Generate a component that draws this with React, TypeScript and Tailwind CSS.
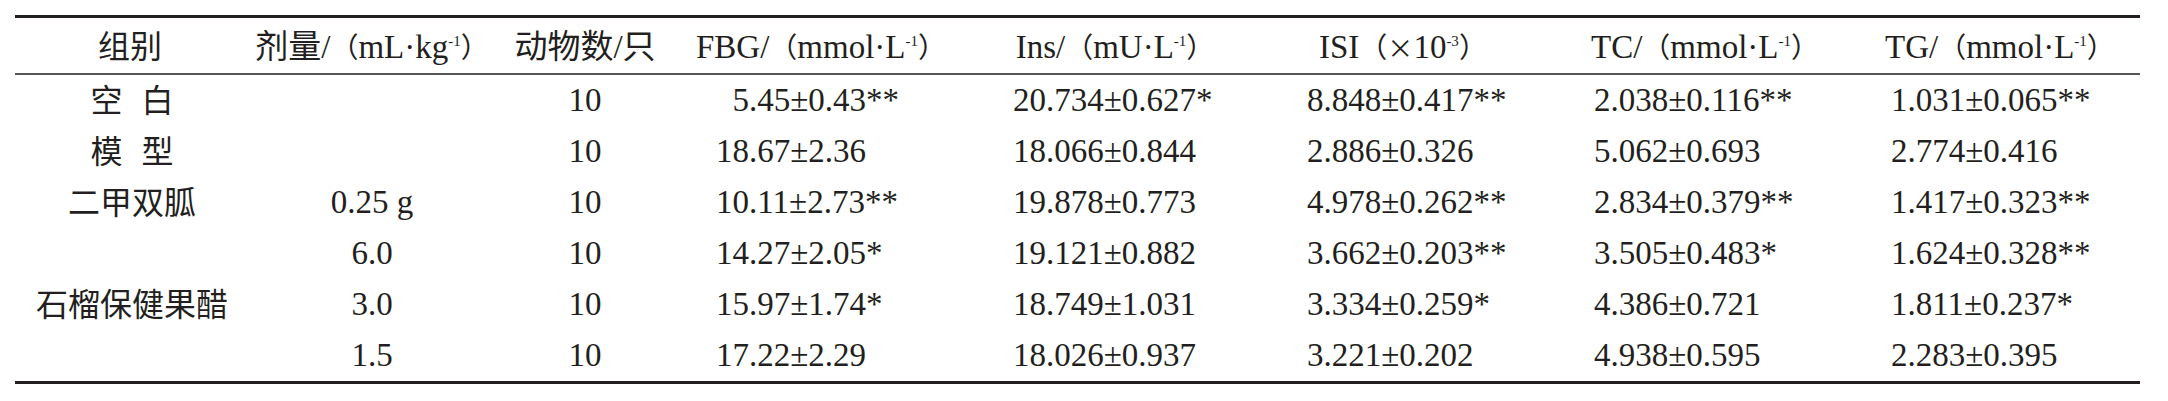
import type { ReactNode } from "react";

/* Table data */

type Row = {
  group: ReactNode;
  dose: string;
  n: string;
  fbg: string;
  ins: string;
  isi: string;
  tc: string;
  tg: string;
};

function Spaced({ a, b }: { a: string; b: string }) {
  return (
    <>
      {a}
      <span className="inline-block w-[19px]" />
      {b}
    </>
  );
}

const ROWS: Row[] = [
  { group: <Spaced a="空" b="白" />, dose: "", n: "10", fbg: "\u20075.45±0.43**", ins: "20.734±0.627*", isi: "8.848±0.417**", tc: "2.038±0.116**", tg: "1.031±0.065**" },
  { group: <Spaced a="模" b="型" />, dose: "", n: "10", fbg: "18.67±2.36", ins: "18.066±0.844", isi: "2.886±0.326", tc: "5.062±0.693", tg: "2.774±0.416" },
  { group: "二甲双胍", dose: "0.25 g", n: "10", fbg: "10.11±2.73**", ins: "19.878±0.773", isi: "4.978±0.262**", tc: "2.834±0.379**", tg: "1.417±0.323**" },
  { group: "", dose: "6.0", n: "10", fbg: "14.27±2.05*", ins: "19.121±0.882", isi: "3.662±0.203**", tc: "3.505±0.483*", tg: "1.624±0.328**" },
  { group: "石榴保健果醋", dose: "3.0", n: "10", fbg: "15.97±1.74*", ins: "18.749±1.031", isi: "3.334±0.259*", tc: "4.386±0.721", tg: "1.811±0.237*" },
  { group: "", dose: "1.5", n: "10", fbg: "17.22±2.29", ins: "18.026±0.937", isi: "3.221±0.202", tc: "4.938±0.595", tg: "2.283±0.395" },
];

const GRID =
  "grid grid-cols-[226px_262px_164px_294px_304px_308px_248px_296px_23px]";

function Sup({ children }: { children: ReactNode }) {
  return <sup className="text-[15px] top-[-0.75em]">{children}</sup>;
}

// fullwidth brackets, a touch smaller than the text
function L() {
  return <span className="text-[28px]">（</span>;
}
function R() {
  return <span className="text-[28px]">）</span>;
}

export default function App() {
  return (
    <div
      className="min-h-[401px] w-[2168px] bg-white pl-[15px] pt-[15px] text-[33px] leading-none text-[#231f20]"
      style={{ fontFamily: '"Liberation Serif", "Noto Sans CJK SC", serif' }}
    >
      <div className="w-[2125px] border-t-[3px] border-b-[3px] border-[#231f20]">
        {/* header */}
        <div className={`${GRID} h-[57px] items-center border-b-2 border-[#555] pt-[3px]`}>
          <div className="pl-[4px] text-center text-[32px]">组别</div>
          <div className="text-center">
            剂量/<L />mL·kg<Sup>-1</Sup><R />
          </div>
          <div className="text-center">动物数/只</div>
          <div className="pl-[14px] text-center">
            FBG/<L />mmol·L<Sup>-1</Sup><R />
          </div>
          <div className="pl-[4px] text-center">
            Ins/<L />mU·L<Sup>-1</Sup><R />
          </div>
          <div className="pl-[54px]">
            ISI<L />
            <span style={{ fontFamily: '"Noto Sans CJK SC", sans-serif' }} className="text-[26px]">×</span>
            10<Sup>-3</Sup><R />
          </div>
          <div className="pl-[16px] text-center">
            TC/<L />mmol·L<Sup>-1</Sup><R />
          </div>
          <div className="pl-[64px]">
            TG/<L />mmol·L<Sup>-1</Sup><R />
          </div>
          <div />
        </div>

        {/* body */}
        {ROWS.map((r, i) => (
          <div key={i} className={`${GRID} h-[51px] items-center whitespace-pre`}>
            <div className="pl-[8px] text-center text-[32px]">{r.group}</div>
            <div className="text-center">{r.dose}</div>
            <div className="text-center">{r.n}</div>
            <div className="pl-[49px]">{r.fbg}</div>
            <div className="pl-[52px]">{r.ins}</div>
            <div className="pl-[42px]">{r.isi}</div>
            <div className="pl-[21px]">{r.tc}</div>
            <div className="pl-[70px]">{r.tg}</div>
            <div />
          </div>
        ))}
      </div>
    </div>
  );
}
